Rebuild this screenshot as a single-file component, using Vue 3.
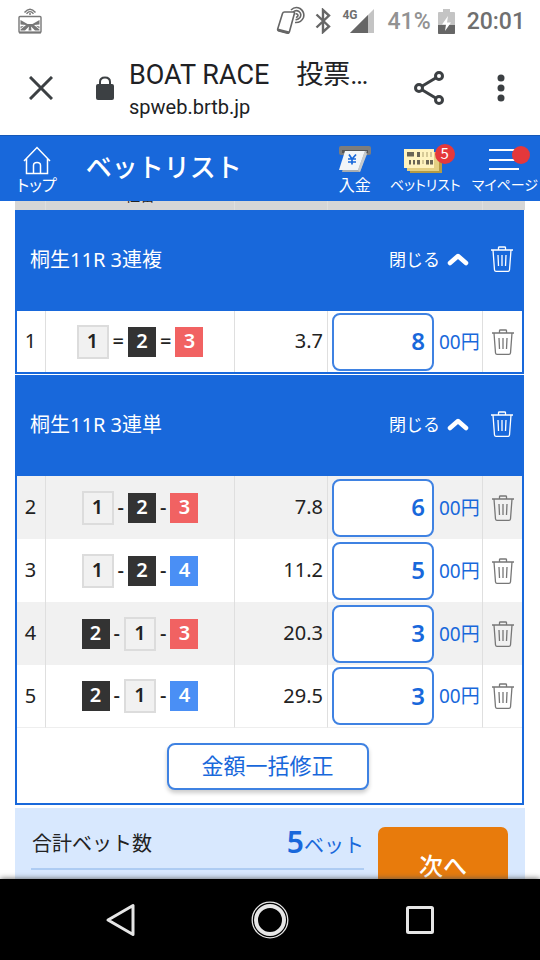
<script setup>
import { ref } from 'vue'

const groups = ref([
  {
    title: '桐生11R 3連複',
    sign: '=',
    bulk: false,
    bets: [{ no: 1, boats: [1, 2, 3], odds: '3.7', amount: '8' }],
  },
  {
    title: '桐生11R 3連単',
    sign: '-',
    bulk: true,
    bets: [
      { no: 2, boats: [1, 2, 3], odds: '7.8', amount: '6' },
      { no: 3, boats: [1, 2, 4], odds: '11.2', amount: '5' },
      { no: 4, boats: [2, 1, 3], odds: '20.3', amount: '3' },
      { no: 5, boats: [2, 1, 4], odds: '29.5', amount: '3' },
    ],
  },
])
</script>

<template>
  <div class="screen">
    <div class="status">
      <svg class="cast" viewBox="0 0 24 28" width="24" height="28" fill="none" stroke="#777" stroke-width="1.4">
        <path d="M6.500 5.500Q12 -1 17.500 5.500M8.500 6.800Q12 2.500 15.500 6.800" />
        <circle cx="12" cy="7" r="1" fill="#777" stroke="none" />
        <rect x="1" y="9.500" width="22" height="16" rx="1" />
        <path d="M1 25.500H23" stroke-width="2" />
        <path d="M2.500 13L9.500 17H14.500L21.500 13V17.500L16 18L21.500 22.500V23.500H17L13 19.500L13.500 23.500H10.500L11 19.500L7 23.500H2.500V22.500L8 18L2.500 17.500Z" fill="#777" stroke="none" />
        <path d="M2.500 19.500L6 18.800L2.500 21.500ZM21.500 19.500L18 18.800L21.500 21.500Z" fill="#777" stroke="none" />
      </svg>
      <svg class="nfc" viewBox="0 0 30 30" width="30" height="30" fill="none" stroke="#666" stroke-width="1.6">
        <path d="M8.500 6H17.500Q18.800 6 18.400 7.500L13.500 25.500Q13 27.500 11.500 27.300L3 25Q1.300 24.500 1.700 23L6.500 7.500Q7 6 8.500 6Z" />
        <path d="M2 22.500L13.700 25.500L12.800 28L1.500 25Z" fill="#666" stroke="none" />
        <path d="M15 4Q19 0 24 2.500Q29 6 27.500 11.500Q25 17 19 16.500M17 6Q20 3.500 23 5.500Q26 8 24 11.500Q22 14 19.500 13.500M19.500 8Q21.800 7.500 22 9.500Q21.500 11.500 20 11" />
      </svg>
      <svg class="bt" viewBox="0 0 16 26" width="16" height="26" fill="none" stroke="#666" stroke-width="2.400">
        <path d="M1.500 6.500L14 18.500L8 24V2L14 7.500L1.500 19.500" />
      </svg>
      <div class="signal">
        <span class="net">4G</span>
        <svg viewBox="0 0 24 24" width="24" height="24"><path d="M24 0V24H0Z" fill="#c4c4c4" /><path d="M18 6V24H0Z" fill="#666" /></svg>
      </div>
      <span class="percent">41%</span>
      <svg class="battery" viewBox="0 0 17 25" width="17" height="25">
        <path d="M5 0H12V3H16Q17 3 17 4V24Q17 25 16 25H1Q0 25 0 24V4Q0 3 1 3H5Z" fill="#c4c4c4" />
        <path d="M0 16H17V24Q17 25 16 25H1Q0 25 0 24Z" fill="#666" />
        <path d="M10 7L4 15.500H8L7 22L13 13.500H9Z" fill="#fff" />
      </svg>
      <span class="clock">20:01</span>
    </div>

    <div class="toolbar">
      <button class="plain close" aria-label="Close">
        <svg viewBox="0 0 24 24" width="24" height="24" fill="none" stroke="#3c4043" stroke-width="3"><path d="M1 1L23 23M23 1L1 23" /></svg>
      </button>
      <svg class="lock" viewBox="0 0 18 24" width="18" height="24">
        <path d="M4 10V6Q4 1.500 9 1.500T14 6V10" fill="none" stroke="#3c4043" stroke-width="2" />
        <rect y="8" width="18" height="16" rx="2" fill="#3c4043" />
      </svg>
      <div class="page">
        <div class="page-title">BOAT RACE　投票…</div>
        <div class="page-url">spweb.brtb.jp</div>
      </div>
      <button class="plain" aria-label="Share">
        <svg viewBox="0 0 32 36" width="32" height="36" fill="none" stroke="#3c4043" stroke-width="3">
          <path d="M6 18L26 6M6 18L26 30" />
          <circle cx="6" cy="18" r="3.500" fill="#fff" /><circle cx="26" cy="6" r="3.500" fill="#fff" /><circle cx="26" cy="30" r="3.500" fill="#fff" />
        </svg>
      </button>
      <button class="plain more" aria-label="More">
        <svg viewBox="0 0 8 28" width="8" height="28" fill="#3c4043"><circle cx="4" cy="4" r="3.500" /><circle cx="4" cy="14" r="3.500" /><circle cx="4" cy="24" r="3.500" /></svg>
      </button>
    </div>

    <header class="appbar">
      <a class="item" href="#">
        <svg viewBox="0 0 28 30" width="28" height="30" fill="none" stroke="#fff" stroke-width="1.500">
          <path d="M1 15L14 1.500L27 15M3.500 12.500V27.500H24.500V12.500M10.500 27V19.500Q10.500 16.500 14 16.500T17.500 19.500V27" />
        </svg>
        <span>トップ</span>
      </a>
      <h1>ベットリスト</h1>
      <a class="item deposit" href="#">
        <svg viewBox="0 0 34 30" width="34" height="30">
          <rect x="1" width="32" height="9" rx="2" fill="#7d7d7d" />
          <rect x="4" y="4" width="26" height="3" fill="#555" />
          <path d="M9 5H29L22 26H4Z" fill="#a9adb0" />
          <path d="M7 5H27L20 24H1Z" fill="#f2f5f8" />
          <path d="M27 5L20 24L22 26L29 8Z" fill="#c6cacd" />
          <path d="M11 8.500L14 13L18 8.500M14 13V18.500M10 13H18M10 16H18" fill="none" stroke="#1868db" stroke-width="1.700" />
        </svg>
        <span>入金</span>
      </a>
      <a class="item small betlist" href="#">
        <svg viewBox="0 0 42 30" width="42" height="30">
          <path d="M6 8H38V27H6Z" fill="#b59b45" /><path d="M3 6H35V25H3Z" fill="#e4cf83" /><path d="M0 3H30V22H0Z" fill="#fff3bf" />
          <g fill="#6a6555"><path d="M3 6H10V10.500H3ZM13 6H16V11H13ZM5 14H7V18.500H5ZM9 14H11V18.500H9ZM13 14H16V18.500H13ZM22 14H25V18.500H22ZM26 14H29V18.500H26Z" /></g>
          <path d="M18 6H20V11H18ZM22 6H24V11H22ZM26 6H28V11H26ZM18 14H20V18H18Z" fill="#d6c997" />
        </svg>
        <span>ベットリスト</span>
        <b class="badge">5</b>
      </a>
      <a class="item small mypage" href="#">
        <svg viewBox="0 0 34 30" width="34" height="30" fill="none" stroke="#fff" stroke-width="2"><path d="M1 4H31M1 14H31M1 23H31" /></svg>
        <span>マイページ</span>
        <i class="dot"></i>
      </a>
    </header>

    <main class="content">
      <table class="bets heads">
        <colgroup><col class="c-no" /><col /><col class="c-odds" /><col class="c-amount" /><col class="c-del" /></colgroup>
        <thead><tr><th></th><th>組番</th><th></th><th></th><th></th></tr></thead>
      </table>

      <section v-for="g in groups" :key="g.title" class="group">
        <div class="group-head">
          <h2>{{ g.title }}</h2>
          <button class="plain toggle">
            閉じる
            <svg viewBox="0 0 22 14" width="22" height="14" fill="none" stroke="#fff" stroke-width="4.500" stroke-linecap="round" stroke-linejoin="round"><path d="M3 11L11 4L19 11" /></svg>
          </button>
          <button class="plain trash" :aria-label="g.title + ' 削除'">
            <svg viewBox="0 0 22 26" width="22" height="26" fill="none" stroke="currentColor" stroke-width="1.300">
              <path d="M0 4H22M7.500 4V1.500Q7.500 1 8.500 1H13.500Q14.500 1 14.500 1.500V4M2 4L3.500 24Q3.700 25.300 5 25.300H17Q18.300 25.300 18.500 24L20 4M7 9L7.500 20M11 9V20M15 9L14.500 20" />
            </svg>
          </button>
        </div>
        <table class="bets" :class="{ tall: g.bulk }" :aria-label="g.title">
          <colgroup><col class="c-no" /><col /><col class="c-odds" /><col class="c-amount" /><col class="c-del" /></colgroup>
          <tbody>
            <tr v-for="b in g.bets" :key="b.no">
              <td class="no">{{ b.no }}</td>
              <td>
                <div class="combo">
                  <template v-for="(n, i) in b.boats" :key="i">
                    <span v-if="i" class="sign">{{ g.sign }}</span>
                    <span class="boat" :class="'boat-' + n">{{ n }}</span>
                  </template>
                </div>
              </td>
              <td class="odds">{{ b.odds }}</td>
              <td>
                <label class="amount"><input v-model="b.amount" type="text" inputmode="numeric" /><span>00円</span></label>
              </td>
              <td class="del">
                <button class="plain trash" :aria-label="b.no + ' 削除'">
                  <svg viewBox="0 0 22 26" width="22" height="26" fill="none" stroke="currentColor" stroke-width="1.300">
                    <path d="M0 4H22M7.500 4V1.500Q7.500 1 8.500 1H13.500Q14.500 1 14.500 1.500V4M2 4L3.500 24Q3.700 25.300 5 25.300H17Q18.300 25.300 18.500 24L20 4M7 9L7.500 20M11 9V20M15 9L14.500 20" />
                  </svg>
                </button>
              </td>
            </tr>
          </tbody>
        </table>
        <div v-if="g.bulk" class="bulk"><button>金額一括修正</button></div>
      </section>

      <div class="summary">
        <div class="total">
          <span>合計ベット数</span>
          <span class="count"><b>5</b>ベット</span>
        </div>
        <button class="next">次へ</button>
      </div>
    </main>

    <nav class="navbar">
      <button class="plain" aria-label="Back">
        <svg viewBox="0 0 36 36" width="36" height="36" fill="none" stroke="#e6e6e6" stroke-width="3" stroke-linejoin="round"><path d="M31 3.500V32.500L6 18Z" /></svg>
      </button>
      <button class="plain" aria-label="Home">
        <svg viewBox="0 0 38 38" width="38" height="38" fill="none" stroke="#e6e6e6"><circle cx="19" cy="19" r="17.800" stroke-width="1.300" /><circle cx="19" cy="19" r="14" stroke-width="4" /></svg>
      </button>
      <button class="plain" aria-label="Recents">
        <svg viewBox="0 0 36 36" width="36" height="36" fill="none" stroke="#e6e6e6" stroke-width="3"><rect x="5.500" y="5.500" width="25" height="25" rx="1" /></svg>
      </button>
    </nav>
  </div>
</template>

<style>
body {
  margin: 0;
  background: #fff;
}
</style>

<style scoped>
* {
  box-sizing: border-box;
}
.screen {
  display: flex;
  flex-direction: column;
  height: 100vh;
  overflow: hidden;
  color: #222;
  font-family: "Noto Sans", "Noto Sans CJK JP", sans-serif;
  font-size: 20px;
}
svg {
  display: block;
  flex: none;
}
a {
  color: inherit;
  text-decoration: none;
}
.plain {
  padding: 0;
  border: 0;
  background: none;
  color: inherit;
  font: inherit;
}

.status {
  display: flex;
  align-items: center;
  height: 42px;
  padding: 0 15px 0 18px;
  font-family: Roboto, sans-serif;
  font-size: 23px;
  font-weight: 500;
  color: #6f6f6f;
}
.nfc {
  margin-left: auto;
}
.bt {
  margin-left: 9px;
}
.signal {
  display: flex;
  align-items: flex-start;
  margin-left: 11px;
}
.signal svg {
  margin-left: -8px;
}
.net {
  font-size: 12px;
  line-height: 12px;
  font-weight: 700;
}
.percent {
  margin-left: 14px;
  color: #929292;
}
.battery {
  margin-left: 7px;
}
.clock {
  margin-left: 12px;
}

.toolbar {
  display: flex;
  align-items: center;
  height: 93px;
  padding: 0 35px 2px 29px;
  color: #202124;
  font-family: Roboto, "Noto Sans CJK JP", sans-serif;
}
.lock {
  margin-left: 43px;
}
.page {
  flex: 1;
  min-width: 0;
  margin-left: 15px;
  padding-top: 4px;
  white-space: nowrap;
}
.page-title {
  font-size: 27px;
  line-height: 34px;
}
.page-url {
  font-size: 20px;
  line-height: 30px;
}
.more {
  margin-left: 52px;
}

.appbar {
  display: flex;
  align-items: flex-start;
  flex: none;
  height: 66px;
  padding: 0 2px 0 17px;
  border-top: 1px solid #1558b8;
  background: #1868db;
  color: #fff;
  font-family: "Noto Sans CJK JP", sans-serif;
}
.item {
  position: relative;
  display: flex;
  flex-direction: column;
  align-items: center;
  padding-top: 10px;
  font-size: 16px;
  line-height: 17px;
  white-space: nowrap;
  font-feature-settings: "palt";
}
.small {
  font-size: 14px;
}
h1 {
  margin: 0 auto 0 29px;
  font-size: 26px;
  line-height: 60px;
  font-weight: 500;
}
.betlist {
  margin-left: 18px;
}
.mypage {
  margin-left: 11px;
}
.badge,
.dot {
  position: absolute;
  border-radius: 50%;
  background: #e5383b;
}
.badge {
  top: 8px;
  right: 6px;
  width: 20px;
  height: 20px;
  font-size: 15px;
  line-height: 18px;
  font-weight: 400;
  text-align: center;
}
.dot {
  top: 10px;
  right: 8px;
  width: 18px;
  height: 18px;
}

.content {
  flex: 1;
  min-height: 0;
  overflow: hidden;
  padding: 0 15px;
}
.bets {
  width: 100%;
  table-layout: fixed;
  border-collapse: separate;
  border-spacing: 0;
}
.c-no {
  width: 29px;
}
.c-odds {
  width: 93px;
}
.c-amount {
  width: 155px;
}
.c-del {
  width: 39px;
}
.heads {
  height: 46px;
  margin-top: -37px;
  border: 0 solid #d6d6d6;
  border-width: 0 3px 0 2px;
  background: #d6d6d6;
  font-family: "Noto Sans CJK JP", sans-serif;
}
.bets th,
.bets td {
  padding: 0;
  border-right: 1px solid #dfdfdf;
}
.bets th:last-child,
.bets td:last-child {
  border-right: 0;
}
.bets th {
  padding-bottom: 8px;
  font-size: 15px;
  line-height: 15px;
  font-weight: 400;
  vertical-align: bottom;
}
.group {
  margin-right: 1px;
  border: 2px solid #1868db;
}
.group + .group {
  margin-top: 1px;
}
.group-head {
  display: flex;
  align-items: center;
  height: 99px;
  padding: 0 9px 6px 13px;
  background: #1868db;
  color: #fff;
}
h2 {
  flex: 1;
  margin: 0;
  font-size: 20px;
  font-weight: 400;
}
.toggle {
  display: flex;
  align-items: center;
  gap: 7px;
  margin-right: 22px;
  font-size: 17px;
}
.bets td {
  height: 61px;
}
.bets.tall td {
  height: 63px;
}
.tall tr:nth-child(odd) {
  background: #f1f1f1;
}
.tall tr:last-child td {
  border-bottom: 1px solid #eee;
}
.bets .no {
  padding: 0 1px 2px 0;
  text-align: center;
}
.bets .odds {
  padding: 0 4px 2px 0;
  text-align: right;
}
.combo {
  display: flex;
  align-items: center;
  justify-content: center;
}
.sign {
  margin: 0 4px;
  line-height: 28px;
  padding-bottom: 2px;
  font-weight: 500;
}
.boat {
  width: 28px;
  height: 30px;
  line-height: 28px;
  font-weight: 600;
  text-align: center;
  color: #fff;
}
.boat-1 {
  width: 32px;
  height: 34px;
  border: 2px solid #dcdcdc;
  background: #f1f1f1;
  color: #222;
}
.boat-2 {
  background: #333;
}
.boat-3 {
  background: #f16262;
}
.boat-4 {
  background: #4a8ff5;
}
.amount {
  display: flex;
  align-items: center;
  gap: 5px;
  padding-left: 4px;
  color: #1868db;
  font-size: 19px;
  white-space: nowrap;
}
.amount span {
  padding-bottom: 2px;
}
.amount input {
  width: 102px;
  height: 58px;
  padding: 0 7px 2px;
  border: 2px solid #3f82e2;
  border-radius: 8px;
  background: #fff;
  color: #1868db;
  font: inherit;
  font-size: 24px;
  font-weight: 600;
  text-align: right;
}
.del {
  color: #777;
}
.del .trash {
  display: block;
  margin: 0 auto;
}
.bulk {
  padding: 15px 4px 13px 0;
  text-align: center;
}
.bulk button {
  display: block;
  width: 202px;
  height: 47px;
  margin: 0 auto;
  padding: 0 0 5px;
  border: 2px solid #3f82e2;
  border-radius: 8px;
  background: #fff;
  box-shadow: 0 3px 4px #ccc;
  color: #1868db;
  font: inherit;
  font-size: 22px;
}
.summary {
  display: flex;
  align-items: flex-start;
  gap: 14px;
  margin-top: 3px;
  padding: 19px 17px 20px 16px;
  background: #d8e8fe;
}
.total {
  display: flex;
  flex: 1;
  align-items: center;
  justify-content: space-between;
  height: 43px;
  padding: 0 0 10px 1px;
  border-bottom: 2px solid #aeccf3;
}
.count {
  color: #1868db;
}
.count b {
  font-size: 30px;
  line-height: 30px;
  font-weight: 600;
}
.next {
  width: 130px;
  height: 76px;
  padding: 0 0 2px;
  border: 0;
  border-radius: 7px;
  background: #e87b0c;
  color: #fff;
  font: inherit;
  font-size: 24px;
  font-weight: 500;
}

.navbar {
  display: flex;
  align-items: center;
  justify-content: center;
  gap: 113px;
  flex: none;
  height: 81px;
  background: #000;
  box-shadow: 0 0 6px #555;
  z-index: 1;
}
</style>
